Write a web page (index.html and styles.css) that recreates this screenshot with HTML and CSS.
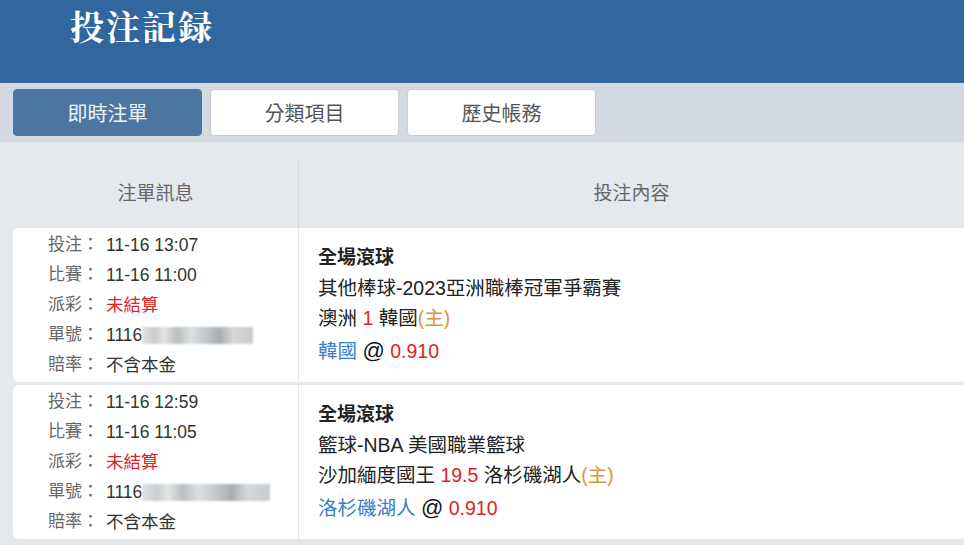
FILE: index.html
```html
<!DOCTYPE html>
<html lang="zh-Hant">
<head>
    <meta charset="UTF-8">
    <meta name="viewport" content="width=device-width, initial-scale=1.0">
    <title>投注記録</title>
    <link rel="stylesheet" href="styles.css">
</head>
<body>

    <div class="top-bar">
        <h1>投注記録</h1>
    </div>

    <div class="tabs">
        <button class="tab active">即時注單</button>
        <button class="tab">分類項目</button>
        <button class="tab">歷史帳務</button>
    </div>

    <div class="records">
        <div class="record-head">
            <div class="col-info">注單訊息</div>
            <div class="col-content">投注內容</div>
        </div>

        <div class="record">
            <div class="col-info">
                <div class="line"><span class="label">投注：</span><span class="value">11-16 13:07</span></div>
                <div class="line"><span class="label">比賽：</span><span class="value">11-16 11:00</span></div>
                <div class="line"><span class="label">派彩：</span><span class="value red">未結算</span></div>
                <div class="line"><span class="label">單號：</span><span class="value">1116<span class="masked"></span></span></div>
                <div class="line"><span class="label">賠率：</span><span class="value">不含本金</span></div>
            </div>
            <div class="col-content">
                <div class="bet-type">全場滾球</div>
                <div class="bet-line">其他棒球-2023亞洲職棒冠軍爭霸賽</div>
                <div class="bet-line">澳洲 <span class="red">1</span> 韓國<span class="home">(主)</span></div>
                <div class="bet-pick"><span class="team">韓國</span> <span class="at">@</span> <span class="red">0.910</span></div>
            </div>
        </div>

        <div class="record">
            <div class="col-info">
                <div class="line"><span class="label">投注：</span><span class="value">11-16 12:59</span></div>
                <div class="line"><span class="label">比賽：</span><span class="value">11-16 11:05</span></div>
                <div class="line"><span class="label">派彩：</span><span class="value red">未結算</span></div>
                <div class="line"><span class="label">單號：</span><span class="value">1116<span class="masked long"></span></span></div>
                <div class="line"><span class="label">賠率：</span><span class="value">不含本金</span></div>
            </div>
            <div class="col-content">
                <div class="bet-type">全場滾球</div>
                <div class="bet-line">籃球-NBA 美國職業籃球</div>
                <div class="bet-line">沙加緬度國王 <span class="red">19.5</span> 洛杉磯湖人<span class="home">(主)</span></div>
                <div class="bet-pick"><span class="team">洛杉磯湖人</span> <span class="at">@</span> <span class="red">0.910</span></div>
            </div>
        </div>
    </div>

</body>
</html>
```

FILE: styles.css
```css
body {
    font-family: "Liberation Sans", "Noto Sans CJK TC", sans-serif;
    background-color: #e5e8ed;
    margin: 0;
    overflow: hidden;
}

.top-bar {
    background-color: #31669e;
    height: 83px;
    padding-left: 70px;
    box-sizing: border-box;
}

.top-bar h1 {
    margin: 0;
    padding-top: 4px;
    color: #fff;
    font-size: 34px;
    line-height: 44px;
    letter-spacing: 2px;
    font-weight: bold;
    font-family: "Noto Serif CJK TC", "Noto Sans CJK TC", serif;
}

.tabs {
    background-color: #d3d9e1;
    height: 59px;
    padding: 6px 13px 0;
    box-sizing: border-box;
    display: flex;
    gap: 8px;
}

.tab {
    width: 189px;
    height: 47px;
    border: 1px solid #c9ced6;
    border-radius: 4px;
    background-color: #fff;
    color: #555;
    font-family: "Liberation Sans", "Noto Sans CJK TC", sans-serif;
    font-size: 20px;
    cursor: pointer;
}

.tab.active {
    background-color: #4a76a1;
    border-color: #4a76a1;
    color: #eef3f8;
}

.records {
    padding-left: 13px;
}

.record-head {
    display: grid;
    grid-template-columns: 285px 1fr;
    margin-top: 18px;
    height: 68px;
    line-height: 68px;
    font-size: 19px;
    color: #666;
    text-align: center;
}

.record-head .col-content {
    border-left: 1px solid #d8dce2;
}

.record {
    display: grid;
    grid-template-columns: 285px 1fr;
    background-color: #fff;
    border-radius: 6px 0 0 6px;
    margin-bottom: 3px;
}

.record .col-info {
    padding: 2px 0 2px 35px;
    font-size: 17px;
    line-height: 30px;
}

.line {
    display: flex;
}

.label {
    width: 58px;
    color: #666;
}

.value {
    color: #333;
    font-size: 17.5px;
}

.red {
    color: #e2221f;
}

.masked {
    display: inline-block;
    width: 111px;
    height: 17px;
    vertical-align: -3px;
    background: linear-gradient(90deg, #dfe2e4 0, #c9cdd0 12%, #e3e5e6 20%, #b9bdc0 32%, #dcdfe1 44%, #c3c7ca 58%, #a9adb0 70%, #d5d8da 82%, #c8cbce 100%);
    filter: blur(1px);
}

.masked.long {
    width: 128px;
}

.record .col-content {
    border-left: 1px solid #e3e5e8;
    padding: 15px 0 14px 19px;
    font-size: 19.5px;
    line-height: 30px;
    color: #222;
}

.bet-type {
    font-weight: bold;
    font-size: 19px;
}

.bet-pick {
    margin-top: 3px;
}

.at {
    font-size: 22px;
    color: #111;
}

.home {
    color: #d9963c;
}

.team {
    color: #3a7dcb;
}
```
